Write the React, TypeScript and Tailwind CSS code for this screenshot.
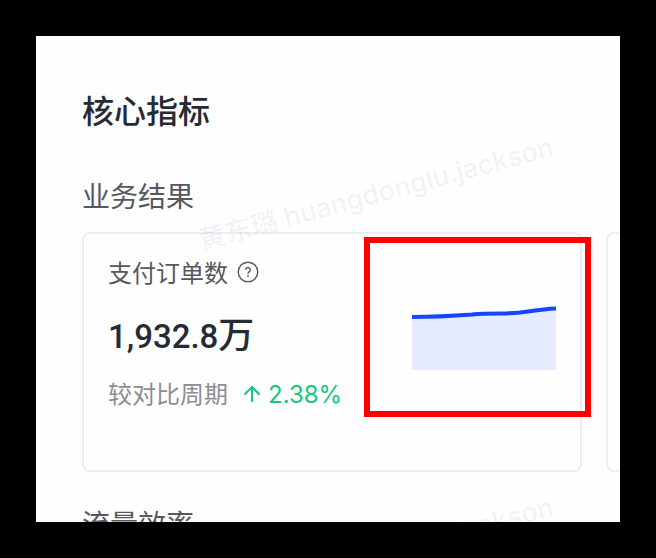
import type { ReactNode } from "react";
import { ArrowUp } from "lucide-react";

const cjk = "font-[family-name:'Noto_Sans_CJK_SC',sans-serif]";

function Watermark({ className }: { className: string }) {
  return (
    <div
      aria-hidden="true"
      className={`pointer-events-none absolute -rotate-15 text-[27px] leading-10 font-medium whitespace-nowrap text-[#2b3a8c]/6 font-[family-name:'Inter','Noto_Sans_CJK_SC',sans-serif] ${className}`}
    >
      黄东璐 huangdonglu.jackson
    </div>
  );
}

function HelpButton() {
  return (
    <button type="button" aria-label="指标说明" className="text-[#55585f]">
      <svg viewBox="0 0 22 22" className="size-[22px]" fill="none" stroke="currentColor" strokeWidth="1.4">
        <circle cx="11" cy="11" r="9.8" />
        <path d="M8.7 8.800a2.300 2.300 0 1 1 3.700 1.900c-.9.6-1.400 1-1.400 2.100" />
        <circle cx="11" cy="15" r=".9" fill="currentColor" stroke="none" />
      </svg>
    </button>
  );
}

function TrendChart() {
  const line = "M0 11C20 11 40 10 60 8.5C70 7.5 80 7.500 90 7.500C112 7.500 120 3.500 144 2.500";
  return (
    <svg viewBox="0 0 144 64" className="block h-16 w-36" role="img" aria-label="支付订单数趋势">
      <path d={`${line}V64H0Z`} fill="#e6ebff" />
      <path d={line} fill="none" stroke="#1744ff" strokeWidth="4" />
    </svg>
  );
}

function Card({ children }: { children?: ReactNode }) {
  return (
    <article className="flex h-60 w-[500px] shrink-0 justify-between rounded-lg border-2 border-[#eeeeef] px-6 py-5">
      {children}
    </article>
  );
}

export default function App() {
  return (
    <div className={`flex h-screen bg-black p-9 ${cjk}`}>
      <main className="relative min-w-0 flex-1 overflow-hidden bg-[#fefefe] pt-[49px] pl-[46px]">
        <Watermark className="top-[138px] left-[157px]" />
        <Watermark className="top-[498px] left-[157px]" />
        <h1 className="text-[32px] leading-[48px] font-medium text-[#252b35]">核心指标</h1>
        <section className="mt-[42px]">
          <h2 className="text-[28px] leading-10 text-[#55585f]">业务结果</h2>
          <div className="mt-[17px] flex gap-6">
            <Card>
              <div>
                <div className="flex items-center gap-[9px] text-2xl leading-9 text-[#55585f]">
                  <h3>支付订单数</h3>
                  <HelpButton />
                </div>
                <p className="mt-[22px] flex items-baseline leading-10 font-medium text-[#252b35]">
                  <span className="text-[33px] font-[family-name:'Roboto',sans-serif]">1,932.8</span>
                  <span className="text-[36px]">万</span>
                </p>
                <p className="mt-[18px] flex items-baseline text-2xl leading-9">
                  <span className="text-[#8b8d93]">较对比周期</span>
                  <ArrowUp className="ml-3 size-6 self-center text-[#12c97b]" strokeWidth={2} />
                  <span className="ml-1 text-[#12c97b] font-[family-name:'Inter',sans-serif]">2.38%</span>
                </p>
              </div>
              <div className="relative mt-[52px] self-start">
                <TrendChart />
                <div className="pointer-events-none absolute -top-[69px] -right-[35px] -bottom-[47px] -left-12 border-6 border-[#ff0000]" />
              </div>
            </Card>
            <Card />
          </div>
        </section>
        <section className="mt-[31px]">
          <h2 className="text-[28px] leading-10 text-[#55585f]">流量效率</h2>
        </section>
      </main>
    </div>
  );
}
